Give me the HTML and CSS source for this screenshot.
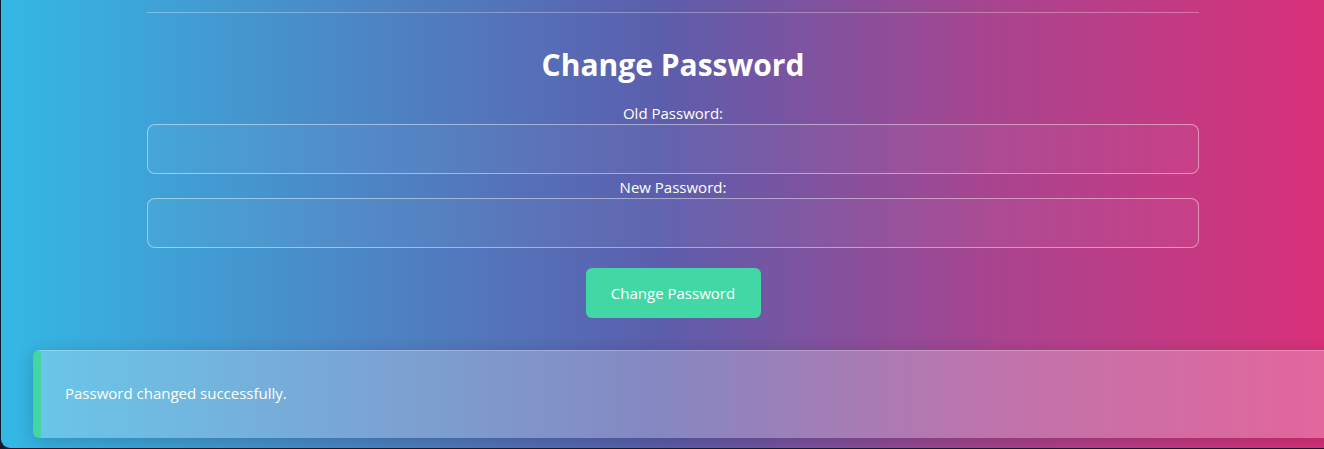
FILE: index.html
```
<!DOCTYPE html>
<html lang="en">
<head>
<meta charset="utf-8">
<title>Change Password</title>
<link rel="stylesheet" href="styles.css">
</head>
<body>
<div class="app">
  <main class="panel">
    <hr class="divider">
    <h2 class="title">Change Password</h2>
    <form class="form">
      <label class="label" for="old">Old Password:</label>
      <input class="field" id="old" type="password">
      <label class="label" for="new">New Password:</label>
      <input class="field" id="new" type="password">
      <button class="btn" type="button">Change Password</button>
    </form>
  </main>
  <div class="toast">Password changed successfully.</div>
</div>
</body>
</html>
```
FILE: styles.css
```
html, body {
  margin: 0;
  padding: 0;
  height: 100%;
  overflow: hidden;
}
body {
  background: #121a30;
  font-family: "Open Sans", "Noto Sans", sans-serif;
  color: #fff;
}
.app {
  margin-left: 1px;
  height: 448px;
  border-radius: 0 0 0 9px;
  background: linear-gradient(90deg, #34b8e4 0%, #4a8ac8 25%, #5c5eac 50%, #a9448f 75%, #d9317a 100%);
  overflow: hidden;
  display: flex;
  flex-direction: column;
}
.panel {
  margin: 0 125px 0 146px;
  padding-top: 12px;
}
.divider {
  margin: 0;
  border: 0;
  border-top: 1px solid rgba(255, 255, 255, 0.3);
}
.title {
  margin: 34px 0 0;
  text-align: center;
  font-size: 30px;
  line-height: 36px;
  font-weight: 700;
}
.form {
  display: flex;
  flex-direction: column;
  align-items: center;
  margin-top: 20px;
}
.label {
  font-size: 15px;
  line-height: 20px;
}
.field {
  box-sizing: border-box;
  width: 100%;
  height: 50px;
  margin: 1px 0 3px;
  border: 1px solid rgba(255, 255, 255, 0.45);
  border-radius: 8px;
  background: rgba(255, 255, 255, 0.04);
  color: #fff;
  font: inherit;
}
.btn {
  margin-top: 17px;
  width: 175px;
  height: 50px;
  border: 0;
  border-radius: 6px;
  background: #42d8a5;
  color: #fff;
  font-family: inherit;
  font-size: 15px;
}
.toast {
  box-sizing: border-box;
  margin: 32px 0 0 32px;
  width: 1320px;
  height: 88px;
  padding: 0 24px 4px;
  display: flex;
  align-items: center;
  font-size: 15px;
  border-radius: 6px;
  border-left: 8px solid #44d6a0;
  border-top: 1px solid rgba(255, 255, 255, 0.25);
  background: rgba(255, 255, 255, 0.26);
  box-shadow: 0 4px 18px rgba(0, 0, 0, 0.18);
}
```
